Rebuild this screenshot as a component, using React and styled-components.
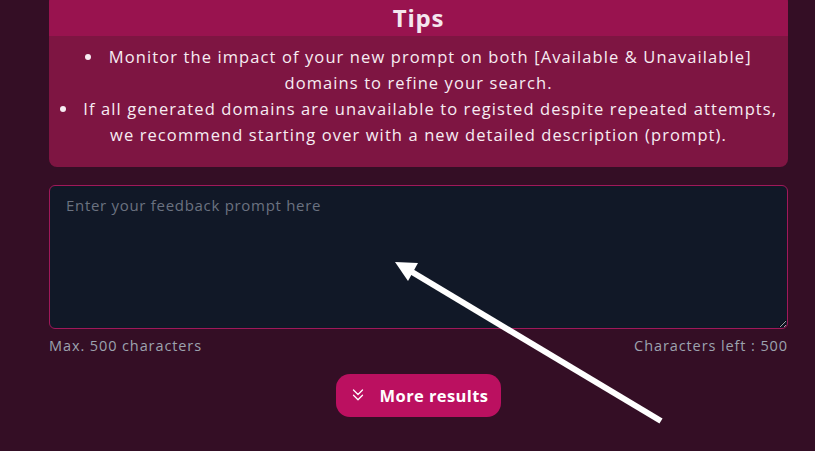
import React from "react";
import styled, { createGlobalStyle } from "styled-components";

const GlobalStyle = createGlobalStyle`
  html, body {
    margin: 0;
    padding: 0;
    background: #340e25;
    font-family: "Open Sans", "Liberation Sans", sans-serif;
    overflow: hidden;
  }
`;

const Page = styled.div`
  position: relative;
  display: flow-root;
  width: 815px;
  height: 451px;
  padding-left: 49px;
  box-sizing: border-box;
  overflow: hidden;
`;

const Column = styled.div`
  width: 739px;
  display: flex;
  flex-direction: column;
  margin-top: -6px;
`;

const TipsCard = styled.section`
  background: #7e1542;
  border-radius: 8px;
  overflow: hidden;
  padding-bottom: 19px;
`;

const TipsHeader = styled.h2`
  margin: 0;
  height: 42px;
  padding-top: 6px;
  box-sizing: border-box;
  background: #99134f;
  color: #f4e6ee;
  font-size: 24px;
  font-weight: 700;
  letter-spacing: 0.8px;
  text-align: center;
  line-height: 36px;
`;

const TipsList = styled.ul`
  margin: 0;
  padding: 8px 4px 0;
  list-style: disc inside;
  text-align: center;
  color: #f7ecf2;
  font-size: 16.5px;
  letter-spacing: 1.1px;
  line-height: 26px;
`;

const Field = styled.textarea`
  margin-top: 18px;
  height: 144px;
  box-sizing: border-box;
  background: #111827;
  border: 1px solid #a0185a;
  border-radius: 6px;
  padding: 8px 16px;
  color: #e5e7eb;
  font-family: inherit;
  font-size: 15px;
  letter-spacing: 0.7px;
  line-height: 22px;
  resize: vertical;
  outline: none;

  &::placeholder {
    color: #6b7280;
  }
`;

const Meta = styled.div`
  display: flex;
  justify-content: space-between;
  margin-top: 7px;
  color: #9ca3af;
  font-size: 14.5px;
  letter-spacing: 0.9px;
  line-height: 20px;
`;

const ButtonRow = styled.div`
  display: flex;
  justify-content: center;
  margin-top: 18px;
`;

const MoreButton = styled.button`
  display: flex;
  align-items: center;
  gap: 13px;
  height: 43px;
  padding: 0 13px;
  background: #bb1060;
  color: #ffffff;
  border: none;
  border-radius: 14px;
  font-family: inherit;
  font-size: 16.5px;
  font-weight: 700;
  letter-spacing: 0.4px;
  cursor: pointer;
`;

const Pointer = styled.svg`
  position: absolute;
  left: 0;
  top: 0;
  pointer-events: none;
`;

const ChevronsDown = () => (
  <svg width="18" height="18" viewBox="0 0 24 24" fill="none" stroke="#fff" strokeWidth="1.7" strokeLinecap="round" strokeLinejoin="round">
    <path d="M6 4l6 6 6-6" />
    <path d="M6 11l6 6 6-6" />
  </svg>
);

export default function App() {
  return (
    <Page>
      <GlobalStyle />
      <Column>
        <TipsCard>
          <TipsHeader>Tips</TipsHeader>
          <TipsList>
            <li>Monitor the impact of your new prompt on both [Available &amp; Unavailable] domains to refine your search.</li>
            <li>If all generated domains are unavailable to registed despite repeated attempts, we recommend starting over with a new detailed description (prompt).</li>
          </TipsList>
        </TipsCard>
        <Field placeholder="Enter your feedback prompt here" />
        <Meta>
          <span>Max. 500 characters</span>
          <span>Characters left : 500</span>
        </Meta>
        <ButtonRow>
          <MoreButton>
            <ChevronsDown />
            More results
          </MoreButton>
        </ButtonRow>
      </Column>
      <Pointer width="815" height="451" viewBox="0 0 815 451">
        <line x1="661" y1="421" x2="412" y2="272" stroke="#fff" strokeWidth="6" />
        <polygon points="395,262 418,263 408,281" fill="#fff" />
      </Pointer>
    </Page>
  );
}
